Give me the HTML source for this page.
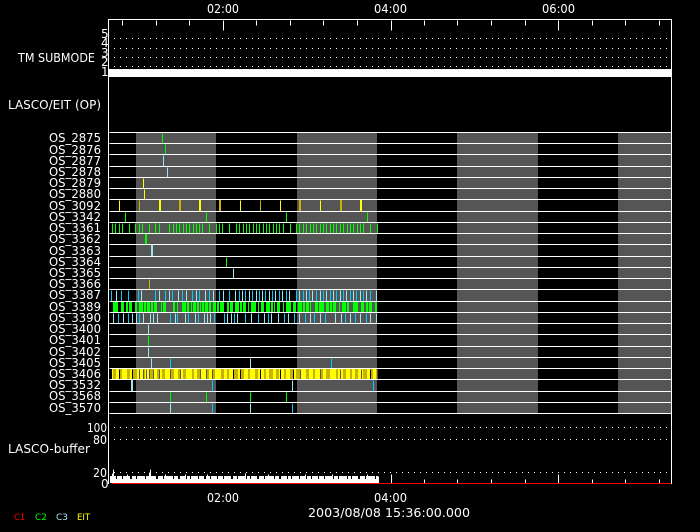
<!DOCTYPE html>
<html><head><meta charset="utf-8"><style>
html,body{margin:0;padding:0;background:#000}
svg{display:block}
text{font-family:"DejaVu Sans","Liberation Sans",sans-serif;font-size:12px;fill:#fff}
</style></head><body>
<svg width="700" height="532" viewBox="0 0 700 532" xmlns="http://www.w3.org/2000/svg">
<rect width="700" height="532" fill="#000"/>
<g shape-rendering="crispEdges">
<g fill="#555"><rect x="136" y="132" width="80" height="281"/><rect x="297" y="132" width="80" height="281"/><rect x="457" y="132" width="81" height="281"/><rect x="618" y="132" width="53" height="281"/></g>

<!-- wide dense rows, aligned to pixel edges -->
<line x1="113" x2="377" y1="307" y2="307" stroke="#0f0" stroke-width="10" stroke-dasharray="5 3 3 2 2 1 3 3 2 2 4 1 2 1 3 1 2 1 3 4 1 1 3 7 2 2 1 4 4 1 2 2 1 1 3 1 2 1 1 1 2 1 3 1 2 2 3 1 2 1 4 3 2 1 3 2 4 1 2 1 3 2 1 2 5 2 1 2 3 2 4 1 2 1 1 2 3 3 1 2 5 2 3 2 4 1 2 1 3 1 1 4 3 1 5 2 3 1 2 1 3 3 1 2 4 1 2 4"/>
<rect x="112" y="369" width="265" height="10" fill="#ff0"/>
<line x1="113" x2="377" y1="374" y2="374" stroke="#c8b400" stroke-width="10" stroke-dasharray="3 4 2 5 3 3 4 6 2 5 3 4 2 3 3 5 4 4 2 3 3 6 2 3 4 5 3 4 2 6 3 3 2 5 4 3 3 4 2 5 3 6 2 3 4 3 3 5 2 4 3 3 4 6"/>

<!-- 2px marks -->
<path stroke="#0f0" stroke-width="2" fill="none" d="M146 234v10"/>
<path stroke="#a0e6f0" stroke-width="2" fill="none" d="M152 245v11M132 380v11"/>
<path stroke="#ff0" stroke-width="2" fill="none" d="M160 200v11M200 200v11M361 200v11"/>
<path stroke="#c8b400" stroke-width="2" fill="none" d="M180 200v11M220 200v11M300 200v11M341 200v11"/>

<!-- 1px strokes, shifted onto pixel centres -->
<g transform="translate(.5 .5)" fill="none">
<path stroke="#0f0" d="M112 223v10M115 223v10M119 223v10M122 223v10M129 223v10M135 223v10M139 223v10M142 223v10M149 223v10M155 223v10M159 223v10M169 223v10M173 223v10M176 223v10M179 223v10M183 223v10M186 223v10M189 223v10M193 223v10M196 223v10M199 223v10M202 223v10M209 223v10M216 223v10M219 223v10M222 223v10M229 223v10M236 223v10M239 223v10M243 223v10M246 223v10M249 223v10M253 223v10M256 223v10M259 223v10M263 223v10M266 223v10M269 223v10M273 223v10M276 223v10M279 223v10M283 223v10M290 223v10M296 223v10M299 223v10M303 223v10M306 223v10M310 223v10M313 223v10M316 223v10M320 223v10M323 223v10M326 223v10M330 223v10M333 223v10M336 223v10M340 223v10M343 223v10M347 223v10M350 223v10M353 223v10M357 223v10M360 223v10M363 223v10M370 223v10M377 223v10"/>
<path stroke="#0cf" d="M111 290v11M121 290v11M128 290v11M138 290v11M155 290v11M165 290v11M172 290v11M182 290v11M192 290v11M199 290v11M209 290v11M219 290v11M229 290v11M239 290v11M245 290v11M252 290v11M259 290v11M265 290v11M272 290v11M279 290v11M286 290v11M296 290v11M303 290v11M309 290v11M316 290v11M323 290v11M330 290v11M336 290v11M343 290v11M350 290v11M356 290v11M363 290v11M370 290v11"/>
<path stroke="#a0e6f0" d="M116 290v11M141 290v11M159 290v11M169 290v11M178 290v11M186 290v11M196 290v11M205 290v11M213 290v11M223 290v11M235 290v11M242 290v11M249 290v11M256 290v11M262 290v11M269 290v11M275 290v11M282 290v11M289 290v11M299 290v11M306 290v11M312 290v11M320 290v11M326 290v11M333 290v11M340 290v11M346 290v11M353 290v11M360 290v11M366 290v11M376 290v11"/>
<path stroke="#0cf" d="M118 313v10M128 313v10M139 313v10M170 313v10M177 313v10M188 313v10M198 313v10M214 313v10M224 313v10M234 313v10M245 313v10M258 313v10M268 313v10M284 313v10M294 313v10M305 313v10M314 313v10M325 313v10M345 313v10M355 313v10M366 313v10"/>
<path stroke="#a0e6f0" d="M113 313v10M123 313v10M132 313v10M136 313v10M143 313v10M150 313v10M153 313v10M157 313v10M175 313v10M185 313v10M195 313v10M204 313v10M207 313v10M210 313v10M227 313v10M231 313v10M237 313v10M251 313v10M264 313v10M271 313v10M278 313v10M288 313v10M299 313v10M310 313v10M320 313v10M335 313v10M341 313v10M350 313v10M360 313v10M370 313v10M376 313v10"/>
<path stroke="#000" d="M119 369v10M132 369v10M233 369v10M240 369v10M260 369v10M280 369v10M293 369v10M370 369v10"/>
<path stroke="#555" d="M139 369v10M143 369v10M146 369v10M149 369v10M153 369v10M159 369v10M170 369v10M180 369v10M200 369v10M206 369v10M212 369v10M300 369v10M320 369v10M340 369v10M361 369v10M377 369v10"/>

<path stroke="#0f0" d="M162 133v10M165 144v10M125 212v10M206 212v10M286 212v10M367 212v10M226 257v10M148 335v11M170 392v10M206 392v10M250 392v10M286 392v10"/>
<path stroke="#a0e6f0" d="M163 155v11M167 167v10M233 268v10M148 324v10M148 347v10M151 358v10M250 358v10M292 380v11M170 403v10M250 403v10"/>
<path stroke="#0cf" d="M170 358v10M331 358v10M212 380v11M373 380v11M212 403v10M292 403v10"/>
<path stroke="#ff0" d="M143 178v10M144 189v10M119 200v11M240 200v11M280 200v11M320 200v11"/>
<path stroke="#c8b400" d="M139 200v11M260 200v11M149 279v10"/>

<path stroke="#fff" d="M109 132H671M109 143H671M109 154H671M109 166H671M109 177H671M109 188H671M109 199H671M109 211H671M109 222H671M109 233H671M109 244H671M109 256H671M109 267H671M109 278H671M109 289H671M109 301H671M109 312H671M109 323H671M109 334H671M109 346H671M109 357H671M109 368H671M109 379H671M109 391H671M109 402H671M109 413H671"/>
</g>

<!-- dotted grid -->
<path stroke="#fff" stroke-dasharray="1 5" fill="none" d="M114 38.5H668M114 48.5H668M114 57.5H668M114 66.5H668M114 427.5H668M114 439.5H668M114 472.5H668"/>
<rect x="109" y="69" width="562" height="8" fill="#fff"/>

<!-- buffer histogram -->
<rect x="110" y="479" width="268" height="4" fill="#fff"/>
<line x1="110" x2="378" y1="477.5" y2="477.5" stroke="#fff" stroke-width="3" stroke-dasharray="6 1 5 1 7 2 4 1 8 1 3 1 6 2 5 1 9 1 4 2 6 1 3 1 7 1 5 2 4 1"/>
<g transform="translate(.5 .5)" fill="none">
<path stroke="#fff" d="M112 473v6M113 469v8M127 474v5M150 469v10M149 472v7M165 474v5M185 474v5M207 474v5M245 473v5M268 474v5M305 474v5M332 474v5M367 474v5M378 476v7"/>
<path stroke="#fff" d="M424 479v4M457 479v4M491 479v4M525 479v4M592 479v4M625 479v4M659 479v4M391 474v9M558 474v9"/>
<path stroke="#fff" d="M122 20v5M156 20v5M189 20v5M256 20v5M290 20v5M323 20v5M357 20v5M424 20v5M457 20v5M491 20v5M525 20v5M592 20v5M625 20v5M659 20v5M223 20v10M391 20v10M558 20v10"/>
</g>
<rect x="112" y="483" width="559" height="1" fill="#f00"/>

<!-- axes -->
<path stroke="#fff" fill="none" d="M108.5 19V484M671.5 19V484M108 19.5H672"/>
</g>

<!-- text -->
<g>
<text x="207" y="13" textLength="32" lengthAdjust="spacingAndGlyphs">02:00</text>
<text x="374" y="13" textLength="33" lengthAdjust="spacingAndGlyphs">04:00</text>
<text x="542" y="13" textLength="33" lengthAdjust="spacingAndGlyphs">06:00</text>
<text x="101" y="38">5</text><text x="101" y="47">4</text><text x="101" y="57">3</text><text x="101" y="66">2</text><text x="101" y="76">1</text>
<text x="18" y="62" textLength="77" lengthAdjust="spacingAndGlyphs">TM SUBMODE</text>
<text x="8" y="109" textLength="93" lengthAdjust="spacingAndGlyphs">LASCO/EIT (OP)</text>
<text x="49" y="142" textLength="52" lengthAdjust="spacingAndGlyphs">OS_2875</text>
<text x="49" y="154" textLength="52" lengthAdjust="spacingAndGlyphs">OS_2876</text>
<text x="49" y="165" textLength="52" lengthAdjust="spacingAndGlyphs">OS_2877</text>
<text x="49" y="176" textLength="52" lengthAdjust="spacingAndGlyphs">OS_2878</text>
<text x="49" y="187" textLength="52" lengthAdjust="spacingAndGlyphs">OS_2879</text>
<text x="49" y="198" textLength="52" lengthAdjust="spacingAndGlyphs">OS_2880</text>
<text x="49" y="210" textLength="52" lengthAdjust="spacingAndGlyphs">OS_3092</text>
<text x="49" y="221" textLength="52" lengthAdjust="spacingAndGlyphs">OS_3342</text>
<text x="49" y="232" textLength="52" lengthAdjust="spacingAndGlyphs">OS_3361</text>
<text x="49" y="243" textLength="52" lengthAdjust="spacingAndGlyphs">OS_3362</text>
<text x="49" y="255" textLength="52" lengthAdjust="spacingAndGlyphs">OS_3363</text>
<text x="49" y="266" textLength="52" lengthAdjust="spacingAndGlyphs">OS_3364</text>
<text x="49" y="277" textLength="52" lengthAdjust="spacingAndGlyphs">OS_3365</text>
<text x="49" y="288" textLength="52" lengthAdjust="spacingAndGlyphs">OS_3366</text>
<text x="49" y="299" textLength="52" lengthAdjust="spacingAndGlyphs">OS_3387</text>
<text x="49" y="311" textLength="52" lengthAdjust="spacingAndGlyphs">OS_3389</text>
<text x="49" y="322" textLength="52" lengthAdjust="spacingAndGlyphs">OS_3390</text>
<text x="49" y="333" textLength="52" lengthAdjust="spacingAndGlyphs">OS_3400</text>
<text x="49" y="344" textLength="52" lengthAdjust="spacingAndGlyphs">OS_3401</text>
<text x="49" y="356" textLength="52" lengthAdjust="spacingAndGlyphs">OS_3402</text>
<text x="49" y="367" textLength="52" lengthAdjust="spacingAndGlyphs">OS_3405</text>
<text x="49" y="378" textLength="52" lengthAdjust="spacingAndGlyphs">OS_3406</text>
<text x="49" y="389" textLength="52" lengthAdjust="spacingAndGlyphs">OS_3532</text>
<text x="49" y="400" textLength="52" lengthAdjust="spacingAndGlyphs">OS_3568</text>
<text x="49" y="412" textLength="52" lengthAdjust="spacingAndGlyphs">OS_3570</text>
<text x="87" y="432" textLength="20" lengthAdjust="spacingAndGlyphs">100</text>
<text x="93" y="444" textLength="14" lengthAdjust="spacingAndGlyphs">80</text>
<text x="8" y="453" textLength="82" lengthAdjust="spacingAndGlyphs">LASCO-buffer</text>
<text x="93" y="477" textLength="14" lengthAdjust="spacingAndGlyphs">20</text>
<text x="101" y="488">0</text>
<text x="207" y="502" textLength="32" lengthAdjust="spacingAndGlyphs">02:00</text>
<text x="374" y="502" textLength="33" lengthAdjust="spacingAndGlyphs">04:00</text>
<text x="308" y="517" textLength="162" lengthAdjust="spacingAndGlyphs">2003/08/08 15:36:00.000</text>
<text x="14" y="520" textLength="11" lengthAdjust="spacingAndGlyphs" style="font-size:9px;fill:#f00">C1</text>
<text x="35" y="520" textLength="12" lengthAdjust="spacingAndGlyphs" style="font-size:9px;fill:#0f0">C2</text>
<text x="56" y="520" textLength="12" lengthAdjust="spacingAndGlyphs" style="font-size:9px;fill:#a0e6f0">C3</text>
<text x="77" y="520" textLength="13" lengthAdjust="spacingAndGlyphs" style="font-size:9px;fill:#ff0">EIT</text>
</g>
</svg>
</body></html>
